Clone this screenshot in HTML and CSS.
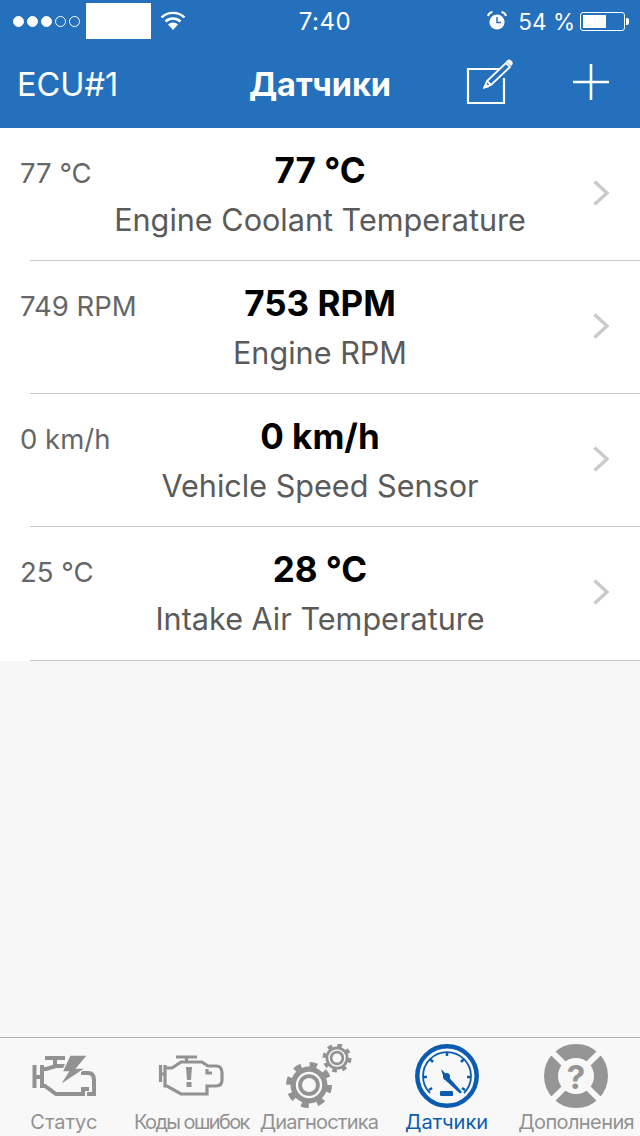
FILE: index.html
```html
<!DOCTYPE html>
<html lang="en">
<head>
    <meta charset="UTF-8">
    <meta name="viewport" content="width=device-width, initial-scale=1.0">
    <title>Датчики</title>
    <link rel="stylesheet" href="styles.css">
</head>
<body>
<div class="screen">
    <header class="header">
        <div class="status-bar">
            <div class="status-left">
                <div class="signal">
                    <span class="dot"></span><span class="dot"></span><span class="dot"></span><span class="dot empty"></span><span class="dot empty"></span>
                </div>
                <div class="carrier"></div>
                <svg class="wifi" width="26" height="20" viewBox="0 0 26 20">
                    <path d="M1.5 6.5 A16.5 16.5 0 0 1 24.5 6.5" fill="none" stroke="#fff" stroke-width="2.4"/>
                    <path d="M5.5 10.5 A11 11 0 0 1 20.5 10.5" fill="none" stroke="#fff" stroke-width="2.4"/>
                    <path d="M8 13.5 A7 7 0 0 1 18 13.5 L13 19 Z" fill="#fff"/>
                </svg>
            </div>
            <div class="status-time">7:40</div>
            <div class="status-right">
                <svg class="alarm" width="20" height="20" viewBox="0 0 20 20">
                    <circle cx="10" cy="11" r="7.6" fill="#fff"/>
                    <path d="M10 6 V11.5 H14" fill="none" stroke="#2570bc" stroke-width="1.5"/>
                    <path d="M1 5 Q2 1.5 5.5 1" fill="none" stroke="#fff" stroke-width="2"/>
                    <path d="M19 5 Q18 1.5 14.5 1" fill="none" stroke="#fff" stroke-width="2"/>
                </svg>
                <span class="percent">54 %</span>
                <div class="battery">
                    <div class="battery-body"><div class="battery-fill"></div></div>
                    <div class="battery-cap"></div>
                </div>
            </div>
        </div>
        <nav class="nav">
            <div class="nav-left">ECU#1</div>
            <div class="nav-title">Датчики</div>
            <div class="nav-actions">
                <svg class="edit-icon" width="48" height="48" viewBox="0 0 48 48">
                    <path d="M33 11 H2 V45 H38 V20" fill="none" stroke="#fff" stroke-width="2.2"/>
                    <path d="M18.5 29 L21 23 L40 5 L44 9 L25 27 Z M21 23 L25 27" fill="none" stroke="#fff" stroke-width="1.8"/>
                    <path d="M17 31 L19.500 25 L23.500 29 Z" fill="#fff"/>
                    <path d="M41 2.500 Q43 0.500 45 2.500 L46 3.500 Q47.500 5.500 46 7 L45 8 L40 3.500 Z" fill="#fff"/>
                </svg>
                <svg class="plus-icon" width="36" height="36" viewBox="0 0 36 36">
                    <path d="M18 0 V36 M0 18 H36" stroke="#fff" stroke-width="2.6"/>
                </svg>
            </div>
        </nav>
    </header>

    <main class="sensor-list">
        <div class="sensor-row">
            <div class="raw-value">77 °C</div>
            <div class="sensor-center">
                <div class="sensor-value">77 °C</div>
                <div class="sensor-name">Engine Coolant Temperature</div>
            </div>
            <svg class="chevron" width="17" height="26" viewBox="0 0 17 26"><path d="M1.500 1.500 L14 13 L1.500 24.500" fill="none" stroke="#c9c9ce" stroke-width="3.400"/></svg>
        </div>
        <div class="sensor-row">
            <div class="raw-value">749 RPM</div>
            <div class="sensor-center">
                <div class="sensor-value">753 RPM</div>
                <div class="sensor-name">Engine RPM</div>
            </div>
            <svg class="chevron" width="17" height="26" viewBox="0 0 17 26"><path d="M1.500 1.500 L14 13 L1.500 24.500" fill="none" stroke="#c9c9ce" stroke-width="3.400"/></svg>
        </div>
        <div class="sensor-row">
            <div class="raw-value">0 km/h</div>
            <div class="sensor-center">
                <div class="sensor-value">0 km/h</div>
                <div class="sensor-name">Vehicle Speed Sensor</div>
            </div>
            <svg class="chevron" width="17" height="26" viewBox="0 0 17 26"><path d="M1.500 1.500 L14 13 L1.500 24.500" fill="none" stroke="#c9c9ce" stroke-width="3.400"/></svg>
        </div>
        <div class="sensor-row">
            <div class="raw-value">25 °C</div>
            <div class="sensor-center">
                <div class="sensor-value">28 °C</div>
                <div class="sensor-name">Intake Air Temperature</div>
            </div>
            <svg class="chevron" width="17" height="26" viewBox="0 0 17 26"><path d="M1.500 1.500 L14 13 L1.500 24.500" fill="none" stroke="#c9c9ce" stroke-width="3.400"/></svg>
        </div>
    </main>

    <footer class="tab-bar">
        <div class="tab">
            <svg class="tab-icon" width="66" height="50" viewBox="0 1 66 50">
                <g fill="none" stroke="#929292" stroke-width="4">
                    <path d="M3.500 15 V38 M3.500 27 H11 M11 15 V36 H14 L25 44 H52 V39 H58"/>
                    <path d="M11 19 H15 L25 16 H36"/>
                    <path d="M14 8 H34 M24 8 V16"/>
                    <path d="M50 23 H57 Q63 23 63 30 V44 H56"/>
                </g>
                <path d="M39 5 H57 L46 18 H55 L28 36 L37 22 H31 Z" fill="#929292" stroke="#f8f8f8" stroke-width="1.500"/>
            </svg>
            <span class="tab-label">Статус</span>
        </div>
        <div class="tab">
            <svg class="tab-icon" width="66" height="50" viewBox="0 1 66 50">
                <g fill="none" stroke="#929292" stroke-width="3.200">
                    <path d="M2.500 15 V32 M2.500 24 H7 M7 15 V36 H9 L23 44 H49 V36 H58 Q64 36 64 30 V23 Q64 16 58 16 H50 L44 12 H23 L14 18 H7"/>
                    <path d="M49 19 V23 H54"/>
                    <path d="M18 7 H39 M28.500 7 V12"/>
                </g>
                <path d="M28 17 H34 L33 30 H29 Z" fill="#929292"/>
                <rect x="28.500" y="32" width="5" height="5" fill="#929292"/>
            </svg>
            <span class="tab-label tight">Коды ошибок</span>
        </div>
        <div class="tab">
            <svg class="tab-icon" width="66" height="64" viewBox="0 0 66 64">
                <circle cx="23" cy="41" r="18.500" fill="#929292"/>
                <circle cx="23" cy="41" r="20.500" fill="none" stroke="#929292" stroke-width="5" stroke-dasharray="7.500 8.600"/>
                <circle cx="23" cy="41" r="12" fill="none" stroke="#f8f8f8" stroke-width="2.400"/>
                <circle cx="23" cy="41" r="7" fill="#f8f8f8"/>
                <circle cx="51" cy="14" r="11.500" fill="#929292"/>
                <circle cx="51" cy="14" r="12.500" fill="none" stroke="#929292" stroke-width="4" stroke-dasharray="4.500 5.320"/>
                <circle cx="51" cy="14" r="8" fill="none" stroke="#f8f8f8" stroke-width="1.500"/>
                <circle cx="51" cy="14" r="4.500" fill="#f8f8f8"/>
            </svg>
            <span class="tab-label snug">Диагностика</span>
        </div>
        <div class="tab active">
            <svg class="tab-icon" width="64" height="64" viewBox="0 0 64 64">
                <circle cx="32" cy="32" r="29.700" fill="none" stroke="#0b5cb0" stroke-width="4.500"/>
                <path d="M15 49 A24 24 0 1 1 49 49" fill="none" stroke="#0b5cb0" stroke-width="1.800"/>
                <path d="M32 8 V12 M15 15 L18 18 M49 15 L46 18 M8 33 H12 M56 33 H52 M14 46 L17 44 M50 46 L47 44" stroke="#0b5cb0" stroke-width="2.500"/>
                <path d="M26 25 L31 30 L47 48 L45 49.500 L29 35 Z" fill="#0b5cb0"/>
                <circle cx="31.500" cy="32.500" r="3.500" fill="#0b5cb0"/>
                <rect x="25" y="47" width="13" height="5" rx="1" fill="#0b5cb0"/>
            </svg>
            <span class="tab-label">Датчики</span>
        </div>
        <div class="tab">
            <svg class="tab-icon" width="64" height="64" viewBox="0 0 64 64">
                <circle cx="32" cy="32" r="25" fill="none" stroke="#959595" stroke-width="14"/>
                <path d="M8 8 L22 22 M56 8 L42 22 M8 56 L22 42 M56 56 L42 42" stroke="#f8f8f8" stroke-width="6"/>
                <text class="help-mark" x="32" y="45" text-anchor="middle">?</text>
            </svg>
            <span class="tab-label wide">Дополнения</span>
        </div>
    </footer>
</div>
</body>
</html>
```

FILE: styles.css
```css
* {
    box-sizing: border-box;
    font-family: Inter, "Liberation Sans", sans-serif;
}

body {
    margin: 0;
    background-color: #f7f7f7;
}

.screen {
    display: flex;
    flex-direction: column;
    width: 640px;
    height: 1136px;
    overflow: hidden;
}

/* Blue header */
.header {
    flex: none;
    background-color: #2570bc;
    color: #fff;
}

.status-bar {
    display: grid;
    grid-template-columns: 1fr auto 1fr;
    align-items: center;
    height: 40px;
    padding: 3px 11px 1px 13px;
}

.status-left {
    display: flex;
    align-items: center;
}

.signal {
    display: flex;
    gap: 3px;
}

.dot {
    width: 11px;
    height: 11px;
    border-radius: 50%;
    background-color: #fff;
    border: 1px solid #fff;
}

.dot.empty {
    background-color: transparent;
}

.carrier {
    width: 65px;
    height: 36px;
    margin: 0 9px 0 6px;
    background-color: #fff;
}

.status-time {
    margin-left: 8px;
    font-size: 24px;
    letter-spacing: 0.600px;
}

.status-right {
    display: flex;
    align-items: center;
    justify-content: flex-end;
}

.percent {
    font-size: 22.500px;
    margin: 0 5px 0 11px;
}

.battery {
    display: flex;
    align-items: center;
}

.battery-body {
    width: 45px;
    height: 19px;
    padding: 2px;
    border: 1px solid #fff;
    border-radius: 3px;
}

.battery-fill {
    width: 23px;
    height: 100%;
    background-color: #fff;
}

.battery-cap {
    width: 3px;
    height: 7px;
    margin-left: 1px;
    background-color: #fff;
    border-radius: 0 2px 2px 0;
}

.nav {
    display: grid;
    grid-template-columns: 1fr auto 1fr;
    align-items: center;
    height: 88px;
}

.nav-left {
    padding-left: 17px;
    font-size: 32.500px;
}

.nav-title {
    font-size: 32.500px;
    font-weight: 700;
}

.nav-actions {
    display: flex;
    align-items: center;
    justify-content: flex-end;
    gap: 59px;
    padding-right: 31px;
}

.edit-icon {
    margin-top: -4px;
}

.plus-icon {
    margin-top: -5px;
}

/* Sensor rows */
.sensor-list {
    flex: 1;
}

.sensor-row {
    position: relative;
    display: flex;
    flex-direction: column;
    height: 133px;
    background-color: #fff;
}

.sensor-row:last-child {
    height: 134px;
}

.sensor-row::after {
    content: "";
    position: absolute;
    left: 30px;
    right: 0;
    bottom: 0;
    height: 1px;
    background-color: #c8c7cc;
}

.raw-value {
    position: absolute;
    left: 20px;
    top: 28px;
    font-size: 27.500px;
    color: #666;
}

.sensor-center {
    display: flex;
    flex-direction: column;
    align-items: center;
    padding-top: 20px;
}

.sensor-value {
    font-size: 35px;
    line-height: 44px;
    font-weight: 700;
    color: #000;
}

.sensor-name {
    margin-top: 6px;
    font-size: 30.600px;
    line-height: 44px;
    color: #5a5a5a;
}

.chevron {
    position: absolute;
    right: 30px;
    top: 52px;
}

/* Bottom tabs */
.tab-bar {
    flex: none;
    display: flex;
    height: 99px;
    background-color: #f8f8f8;
    border-top: 1px solid #b2b2b2;
}

.tab {
    flex: 1;
    display: grid;
    grid-template-rows: 1fr auto;
    justify-items: center;
    align-items: center;
    padding: 4px 0 2px;
    color: #929292;
}

.tab.active {
    padding-right: 2px;
    color: #0b5cb0;
}

.tab-label {
    font-size: 20px;
    line-height: 24px;
    white-space: nowrap;
}

.tab-label.tight {
    letter-spacing: -1.600px;
}

.tab-label.snug {
    letter-spacing: -0.800px;
}

.tab-label.wide {
    letter-spacing: -0.600px;
}

.help-mark {
    font-size: 33px;
    font-weight: 700;
    fill: #959595;
}
```
